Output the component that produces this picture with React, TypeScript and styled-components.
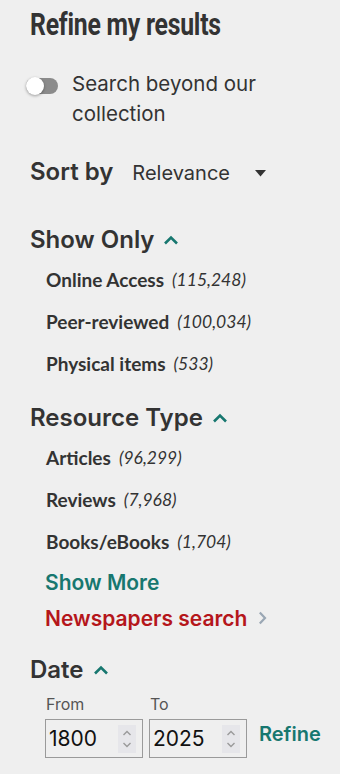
import React from "react";
import styled, { createGlobalStyle } from "styled-components";

const Global = createGlobalStyle`
  html, body { margin: 0; padding: 0; background: #efefef; }
  body { font-family: "Inter", "Lato", sans-serif; color: #333; }
`;

const Panel = styled.aside`
  width: 340px;
  box-sizing: border-box;
  padding: 8px 0 0 30px;
  display: flex;
  flex-direction: column;
`;

const Title = styled.h2`
  margin: 0;
  font-family: "Roboto", "Liberation Sans", sans-serif;
  font-weight: 700;
  font-size: 31px;
  line-height: 34px;
  color: #333;
  letter-spacing: -0.3px;
  transform: scaleX(0.8);
  transform-origin: left center;
  white-space: nowrap;
`;

const ToggleRow = styled.label`
  display: flex;
  align-items: flex-start;
  gap: 14px;
  margin: 27px 0 0 -4px;
`;

const Track = styled.span`
  flex: none;
  width: 32px;
  height: 16px;
  margin-top: 9px;
  border-radius: 8px;
  background: #8b8b8b;
  display: flex;
  align-items: center;
`;

const Knob = styled.span`
  width: 18px;
  height: 18px;
  border-radius: 50%;
  background: #fff;
  box-shadow: 0 1px 3px rgba(0, 0, 0, 0.35);
`;

const ToggleText = styled.span`
  font-size: 20.5px;
  line-height: 30px;
  color: #333;
`;

const SortRow = styled.div`
  display: flex;
  align-items: baseline;
  margin-top: 28px;
`;

const SectionHead = styled.h3`
  margin: 0;
  font-size: 24px;
  font-weight: 600;
  line-height: 30px;
  color: #333;
  display: flex;
  align-items: center;
  gap: 9px;
`;

const SelectText = styled.span`
  margin-left: 19px;
  font-size: 20px;
  color: #333;
  width: 134px;
  display: inline-flex;
  align-items: center;
  justify-content: space-between;
`;

const Section = styled.section<{ $top: number }>`
  margin-top: ${(p) => p.$top}px;
  display: flex;
  flex-direction: column;
`;

const List = styled.ul`
  list-style: none;
  margin: 3px 0 0;
  padding: 0 0 0 16px;
  display: flex;
  flex-direction: column;
`;

const Item = styled.li`
  height: 42px;
  display: flex;
  align-items: center;
  font-family: "Lato", sans-serif;
  font-weight: 700;
  font-size: 19px;
  color: #333;
`;

const Count = styled.span`
  margin-left: 8px;
  font-family: "Lato", sans-serif;
  font-style: italic;
  font-weight: 400;
  font-size: 17.5px;
`;

const LinkText = styled.a<{ $color: string }>`
  display: flex;
  align-items: center;
  gap: 11px;
  padding-left: 15px;
  height: 36px;
  font-size: 21px;
  font-weight: 600;
  color: ${(p) => p.$color};
  text-decoration: none;
`;

const MoreLinks = styled.div`
  margin-top: 2px;
  display: flex;
  flex-direction: column;
`;

const DateGrid = styled.div`
  margin-top: 9px;
  padding-left: 15px;
  display: flex;
  align-items: flex-end;
  gap: 6px;
`;

const Field = styled.label`
  display: flex;
  flex-direction: column;
  gap: 5px;
`;

const FieldLabel = styled.span`
  padding-left: 1px;
  font-size: 16px;
  color: #555;
  line-height: 20px;
`;

const NumberBox = styled.span`
  width: 98px;
  height: 39px;
  box-sizing: border-box;
  border: 1px solid #9a9a9a;
  background: #efefef;
  display: flex;
  align-items: center;
  justify-content: space-between;
  padding: 0 6px 0 3px;
  font-size: 21px;
  color: #111;
`;

const Spinner = styled.span`
  width: 18px;
  height: 28px;
  background: #e6e6ea;
  display: flex;
  align-items: center;
  justify-content: center;
`;

const RefineLink = styled.a`
  margin: 0 0 12px 6px;
  font-size: 20px;
  font-weight: 600;
  color: #17776f;
  text-decoration: none;
`;

const ChevronUp = () => (
  <svg width="16" height="10" viewBox="0 0 16 10" fill="none">
    <path d="M2 8.5 L8 2.5 L14 8.5" stroke="#17776f" strokeWidth="2.6" />
  </svg>
);

const Caret = () => (
  <svg width="11" height="7" viewBox="0 0 11 7">
    <path d="M0 0 H11 L5.5 6.5 Z" fill="#333" />
  </svg>
);

const ChevronRight = () => (
  <svg width="9" height="14" viewBox="0 0 9 14" fill="none">
    <path d="M1.8 1.5 L7 7 L1.8 12.5" stroke="#9aa7b4" strokeWidth="2.2" />
  </svg>
);

const Spin = () => (
  <Spinner>
    <svg width="10" height="22" viewBox="0 0 10 22" fill="none">
      <path d="M1.5 7 L5 3.5 L8.5 7" stroke="#9a9a9a" strokeWidth="1.4" />
      <path d="M1.5 15 L5 18.5 L8.5 15" stroke="#9a9a9a" strokeWidth="1.4" />
    </svg>
  </Spinner>
);

const showOnly = [
  ["Online Access", "115,248"],
  ["Peer-reviewed", "100,034"],
  ["Physical items", "533"],
];
const resourceTypes = [
  ["Articles", "96,299"],
  ["Reviews", "7,968"],
  ["Books/eBooks", "1,704"],
];

export default function App() {
  return (
    <>
      <Global />
      <Panel>
        <Title>Refine my results</Title>
        <ToggleRow>
          <Track>
            <Knob />
          </Track>
          <ToggleText>
            Search beyond our
            <br />
            collection
          </ToggleText>
        </ToggleRow>
        <SortRow>
          <SectionHead>Sort by</SectionHead>
          <SelectText>
            Relevance <Caret />
          </SelectText>
        </SortRow>
        <Section $top={38}>
          <SectionHead>
            Show Only <ChevronUp />
          </SectionHead>
          <List>
            {showOnly.map(([n, c]) => (
              <Item key={n}>
                {n}
                <Count>({c})</Count>
              </Item>
            ))}
          </List>
        </Section>
        <Section $top={19}>
          <SectionHead>
            Resource Type <ChevronUp />
          </SectionHead>
          <List>
            {resourceTypes.map(([n, c]) => (
              <Item key={n}>
                {n}
                <Count>({c})</Count>
              </Item>
            ))}
          </List>
          <MoreLinks>
            <LinkText $color="#17776f" href="#">Show More</LinkText>
            <LinkText $color="#b5161b" href="#">
              Newspapers search <ChevronRight />
            </LinkText>
          </MoreLinks>
        </Section>
        <Section $top={19}>
          <SectionHead>
            Date <ChevronUp />
          </SectionHead>
          <DateGrid>
            <Field>
              <FieldLabel>From</FieldLabel>
              <NumberBox>
                1800
                <Spin />
              </NumberBox>
            </Field>
            <Field>
              <FieldLabel>To</FieldLabel>
              <NumberBox>
                2025
                <Spin />
              </NumberBox>
            </Field>
            <RefineLink href="#">Refine</RefineLink>
          </DateGrid>
        </Section>
      </Panel>
    </>
  );
}
